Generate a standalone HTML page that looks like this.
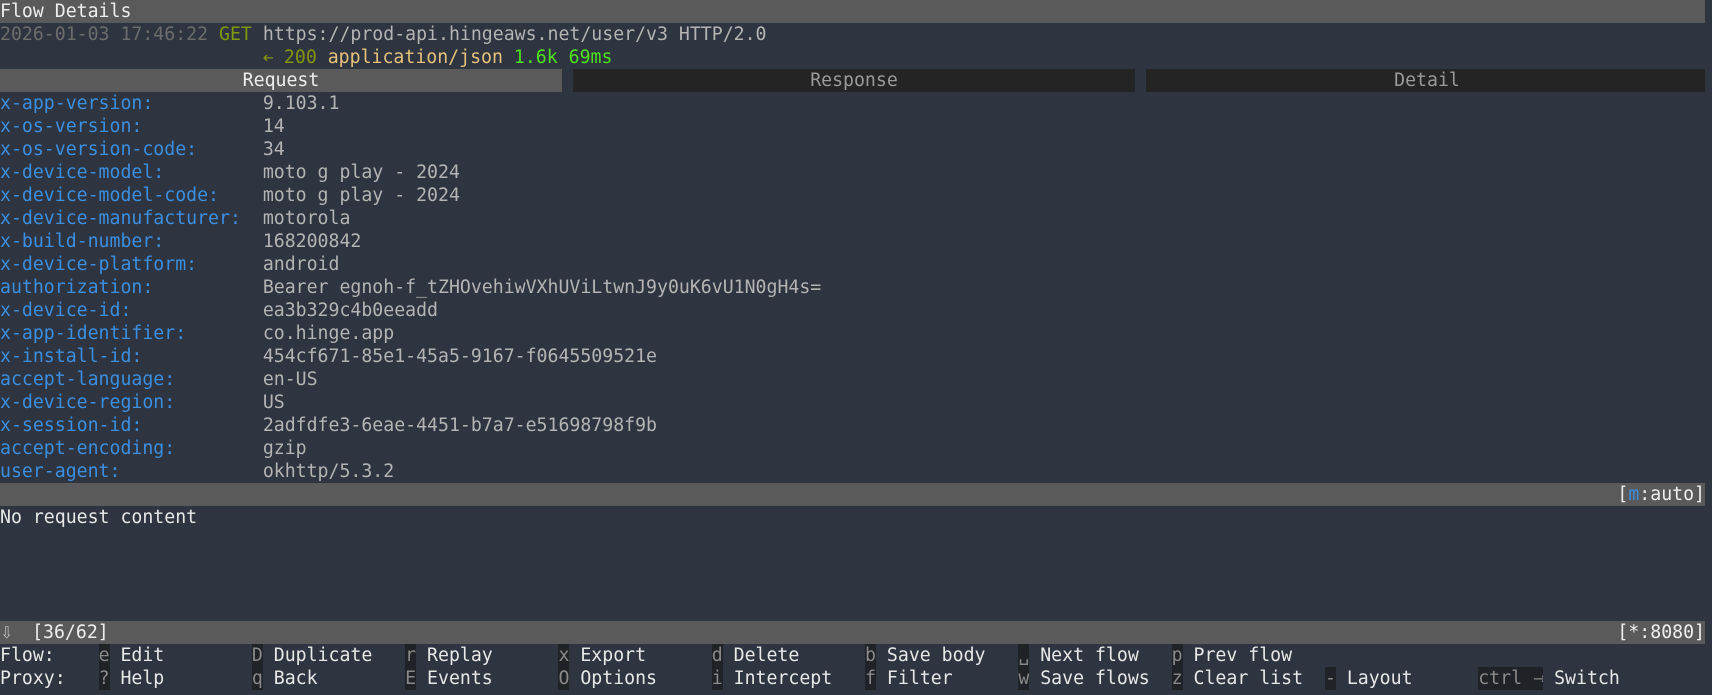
<!DOCTYPE html>
<html><head><meta charset="utf-8"><style>
html,body{margin:0;padding:0;background:#2e3440;width:1712px;height:695px;overflow:hidden}
pre{margin:0;font-family:"DejaVu Sans Mono","Liberation Mono",monospace;font-size:18.2px;line-height:23px;color:#d8d8d8;white-space:pre;width:1705px}
.r{display:block;height:23px;overflow:hidden;position:relative}
.bar{background:#5a5a5a;color:#eee}
.k{color:#3b8fe0}.v{color:#b4b4b4}
.ts{color:#6c6c6c}.get{color:#7f9a0a}.url{color:#b4b4b4}.st{color:#85950a}.ct{color:#e6c27a}.gr{color:#4ee21a}
.tab{position:absolute;top:0;height:23px;text-align:center;width:562px}
.key{background:#1f2226;color:#8a8a8a;display:inline-block;width:1ch;height:23px;vertical-align:top;text-align:center}
.w1{display:inline-block;width:1ch;height:23px;line-height:23px;overflow:hidden;text-align:center;vertical-align:top;font-family:"DejaVu Sans",sans-serif;font-size:16px}
.t{color:#e8e8e8}
</style></head><body><pre>
<div class="r bar">Flow Details</div><div class="r"><span class="ts">2026-01-03 17:46:22</span> <span class="get">GET</span> <span class="url">https://prod-api.hingeaws.net/user/v3 HTTP/2.0</span></div><div class="r">                        <span class="st"><span class="w1">←</span> 200</span> <span class="ct">application/json</span> <span class="gr">1.6k 69ms</span></div><div class="r"><div class="tab" style="left:0;background:#5a5a5a;color:#eee">Request</div><div class="tab" style="left:573px;background:#242424;color:#9a9a9a">Response</div><div class="tab" style="left:1146px;background:#242424;color:#9a9a9a">Detail</div></div><div class="r"><span class="k">x-app-version:</span>          <span class="v">9.103.1</span></div><div class="r"><span class="k">x-os-version:</span>           <span class="v">14</span></div><div class="r"><span class="k">x-os-version-code:</span>      <span class="v">34</span></div><div class="r"><span class="k">x-device-model:</span>         <span class="v">moto g play - 2024</span></div><div class="r"><span class="k">x-device-model-code:</span>    <span class="v">moto g play - 2024</span></div><div class="r"><span class="k">x-device-manufacturer:</span>  <span class="v">motorola</span></div><div class="r"><span class="k">x-build-number:</span>         <span class="v">168200842</span></div><div class="r"><span class="k">x-device-platform:</span>      <span class="v">android</span></div><div class="r"><span class="k">authorization:</span>          <span class="v">Bearer egnoh-f_tZHOvehiwVXhUViLtwnJ9y0uK6vU1N0gH4s=</span></div><div class="r"><span class="k">x-device-id:</span>            <span class="v">ea3b329c4b0eeadd</span></div><div class="r"><span class="k">x-app-identifier:</span>       <span class="v">co.hinge.app</span></div><div class="r"><span class="k">x-install-id:</span>           <span class="v">454cf671-85e1-45a5-9167-f0645509521e</span></div><div class="r"><span class="k">accept-language:</span>        <span class="v">en-US</span></div><div class="r"><span class="k">x-device-region:</span>        <span class="v">US</span></div><div class="r"><span class="k">x-session-id:</span>           <span class="v">2adfdfe3-6eae-4451-b7a7-e51698798f9b</span></div><div class="r"><span class="k">accept-encoding:</span>        <span class="v">gzip</span></div><div class="r"><span class="k">user-agent:</span>             <span class="v">okhttp/5.3.2</span></div><div class="r bar" style="text-align:right">[<span style="color:#3b8fe0">m</span>:auto]</div><div class="r t">No request content</div><div class="r"></div><div class="r"></div><div class="r"></div><div class="r"></div><div class="r bar"><span class="w1" style="color:#bbb">⇩</span>  [36/62]<span style="position:absolute;right:0;top:0">[*:8080]</span></div><div class="r t">Flow:    <span class="key">e</span> Edit        <span class="key">D</span> Duplicate   <span class="key">r</span> Replay      <span class="key">x</span> Export      <span class="key">d</span> Delete      <span class="key">b</span> Save body   <span class="key">␣</span> Next flow   <span class="key">p</span> Prev flow</div><div class="r t">Proxy:   <span class="key">?</span> Help        <span class="key">q</span> Back        <span class="key">E</span> Events      <span class="key">O</span> Options     <span class="key">i</span> Intercept   <span class="key">f</span> Filter      <span class="key">w</span> Save flows  <span class="key">z</span> Clear list  <span class="key">-</span> Layout      <span style="background:#1f2226;color:#8a8a8a;display:inline-block;height:23px;vertical-align:top">ctrl <span class="w1">→</span></span> Switch</div></pre></body></html>
